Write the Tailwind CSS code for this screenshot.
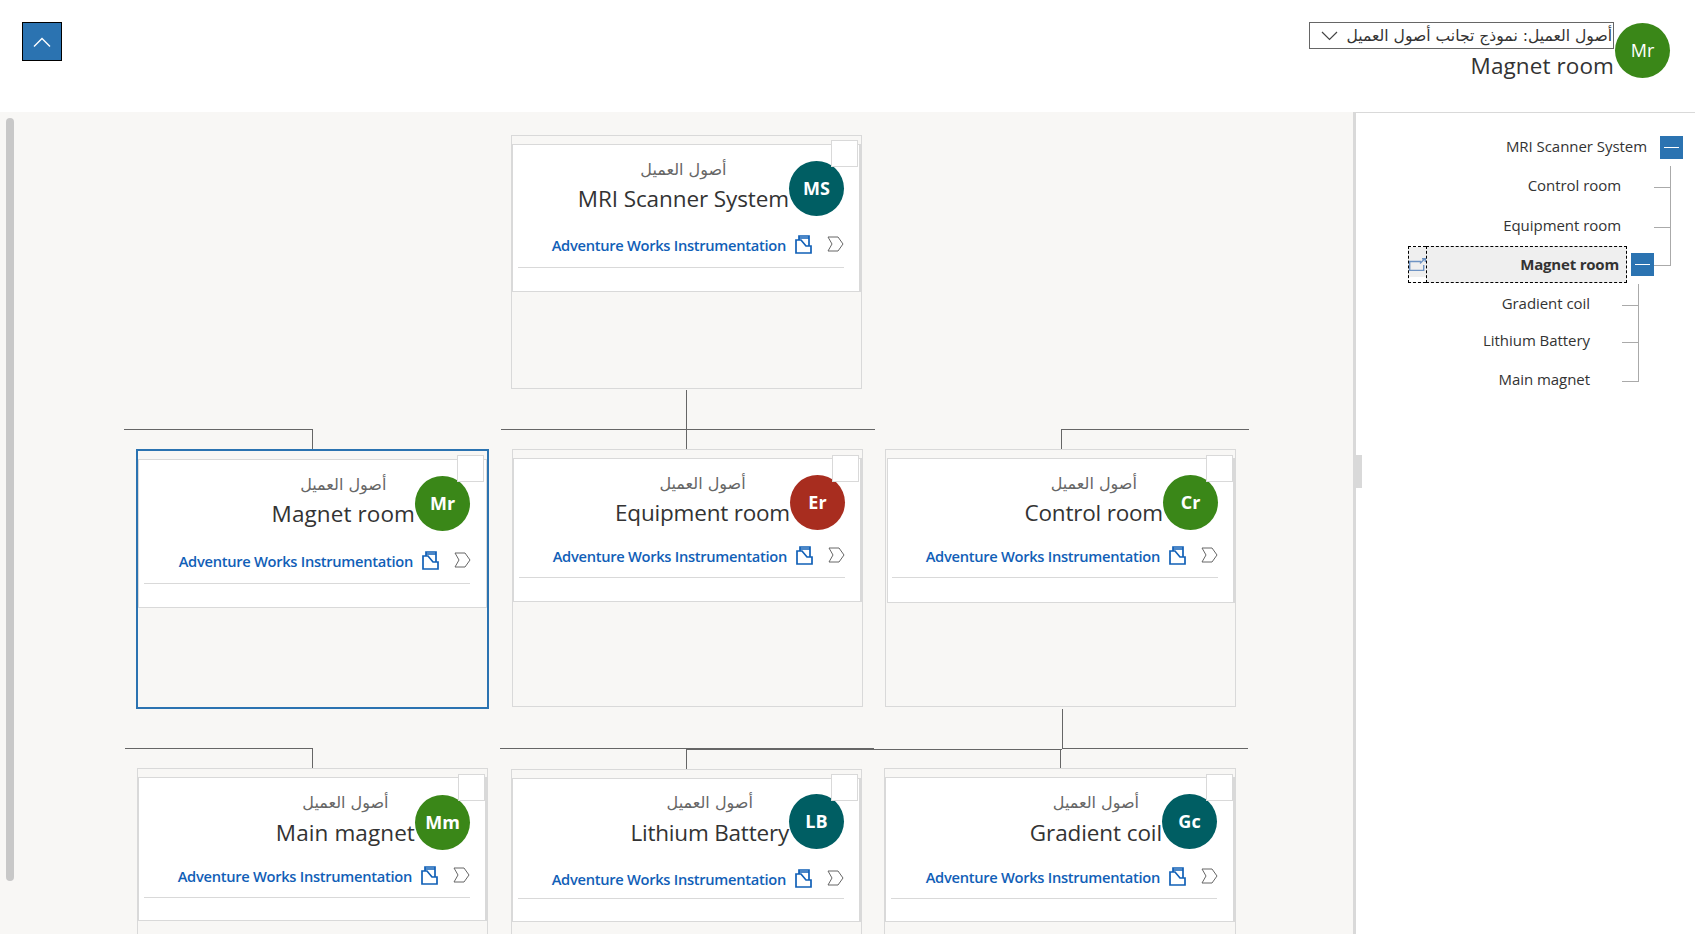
<!DOCTYPE html>
<html lang="ar">
<head>
    <meta charset="UTF-8">
    <title>Magnet room</title>
    <script src="https://cdn.jsdelivr.net/npm/@tailwindcss/browser@4"></script>
</head>
<body class="h-screen overflow-hidden bg-white font-['Open_Sans','DejaVu_Sans',sans-serif] text-[#333]">

    <!-- header -->
    <header class="h-[112px] flex justify-between items-start">
        <button class="mt-[22px] ml-[22px] w-10 h-[39px] bg-[#2b73b1] border border-black flex items-center justify-center">
            <svg width="18" height="10" viewBox="0 0 18 10" fill="none" stroke="white" stroke-width="1.4"><path d="M1 9.5 9 1.5l8 8"/></svg>
        </button>
        <div class="mt-[22px] mr-[25px] flex items-start">
            <div class="flex flex-col items-end">
                <div dir="ltr" class="w-[305px] h-[27px] border border-[#666] flex items-center justify-between pl-[11px] pr-[1px]">
                    <svg width="17" height="10" viewBox="0 0 17 10" fill="none" stroke="#444" stroke-width="1.2"><path d="M1 1l7.500 7.500L16 1"/></svg>
                    <span dir="rtl" class="mt-[2px] text-[15.6px] leading-none font-['DejaVu_Sans',sans-serif]">أصول العميل: نموذج تجانب أصول العميل</span>
                </div>
                <div class="text-[22.5px] leading-[36px] -mt-[1px] tracking-[0.1px]">Magnet room</div>
            </div>
            <div class="ml-[1px] mt-[1px] w-[55px] h-[55px] rounded-full bg-[#3a8718] text-white text-[18px] flex items-center justify-center">Mr</div>
        </div>
    </header>

    <main class="h-[822px] flex">
        <!-- org chart canvas -->
        <section class="relative flex-1 bg-[#f8f7f5] overflow-hidden">
            <div class="absolute left-[6px] top-[6px] w-2 h-[763px] rounded-full bg-[#c8c8c8]"></div>

            <!-- connectors -->
            <div class="absolute left-[124px] top-[317px] w-[189px] h-px bg-[#666]"></div>
            <div class="absolute left-[312px] top-[317px] w-px h-[20px] bg-[#666]"></div>
            <div class="absolute left-[686px] top-[278px] w-px h-[59px] bg-[#666]"></div>
            <div class="absolute left-[501px] top-[317px] w-[374px] h-px bg-[#666]"></div>
            <div class="absolute left-[1061px] top-[317px] w-[188px] h-px bg-[#666]"></div>
            <div class="absolute left-[1061px] top-[317px] w-px h-[20px] bg-[#666]"></div>
            <div class="absolute left-[1062px] top-[597px] w-px h-[40px] bg-[#666]"></div>
            <div class="absolute left-[125px] top-[636px] w-[188px] h-px bg-[#666]"></div>
            <div class="absolute left-[312px] top-[636px] w-px h-[21px] bg-[#666]"></div>
            <div class="absolute left-[500px] top-[636px] w-[374px] h-px bg-[#666]"></div>
            <div class="absolute left-[686px] top-[637px] w-[376px] h-px bg-[#666]"></div>
            <div class="absolute left-[686px] top-[637px] w-px h-[20px] bg-[#666]"></div>
            <div class="absolute left-[1062px] top-[636px] w-[186px] h-px bg-[#666]"></div>
            <div class="absolute left-[1060px] top-[637px] w-px h-[20px] bg-[#666]"></div>

            <!-- MRI Scanner System -->
            <article class="absolute left-[511px] top-[23px] w-[351px] h-[254px] border border-[#d9d9d9] pt-2">
                <div class="absolute right-[3px] top-[4px] w-[27px] h-[27px] border border-[#d9d9d9] bg-white z-10"></div>
                <div class="h-[148px] bg-white border border-[#d9d9d9] border-r-2 pt-[16px] pl-[5px] pr-[15px]">
                    <div class="flex justify-end items-start">
                        <div class="flex flex-col items-center -mt-1">
                            <span class="h-6 text-[16px] leading-[26px] text-[#666] font-['DejaVu_Sans',sans-serif]">أصول العميل</span>
                            <span class="text-[22.5px] leading-9 tracking-[-0.1px] whitespace-nowrap">MRI Scanner System</span>
                        </div>
                        <div class="w-[55px] h-[55px] rounded-full bg-[#005e63] text-white font-bold text-[18px] flex items-center justify-center">MS</div>
                    </div>
                    <div class="mt-[16px] h-6 flex justify-end items-center">
                        <a class="text-[14.7px] font-semibold text-[#1160b7] tracking-[-0.3px] whitespace-nowrap">Adventure Works Instrumentation</a>
                        <svg class="ml-[9px] mb-[2px]" width="17" height="19" viewBox="0 0 17 19" fill="none" stroke="#1160b7" stroke-width="1.7"><path d="M1 5h5l5 6h5v7H1zM4 5V1h10v10M4 3h10"/></svg>
                        <svg class="ml-[15px] mb-[2px]" width="17" height="16" viewBox="0 0 17 16" fill="none" stroke="#666"><path d="M1 1h10l5 7-5 7H1l4-7z"/></svg>
                    </div>
                    <div class="mt-[10px] border-b border-[#d9d9d9]"></div>
                </div>
            </article>

            <!-- Magnet room (selected) -->
            <article class="absolute left-[136px] top-[337px] w-[353px] h-[260px] border-2 border-[#2b73b1] pt-2">
                <div class="absolute right-[3px] top-[4px] w-[27px] h-[27px] border border-[#d9d9d9] bg-white z-10"></div>
                <div class="h-[149px] bg-white border border-[#d9d9d9] pt-[16px] pl-[5px] pr-[16px]">
                    <div class="flex justify-end items-start">
                        <div class="flex flex-col items-center -mt-1">
                            <span class="h-6 text-[16px] leading-[26px] text-[#666] font-['DejaVu_Sans',sans-serif]">أصول العميل</span>
                            <span class="text-[22.5px] leading-9 tracking-[0.1px] whitespace-nowrap">Magnet room</span>
                        </div>
                        <div class="w-[55px] h-[55px] rounded-full bg-[#3a8718] text-white font-bold text-[18px] flex items-center justify-center">Mr</div>
                    </div>
                    <div class="mt-[17px] -mr-px h-6 flex justify-end items-center">
                        <a class="text-[14.7px] font-semibold text-[#1160b7] tracking-[-0.3px] whitespace-nowrap">Adventure Works Instrumentation</a>
                        <svg class="ml-[9px] mb-[2px]" width="17" height="19" viewBox="0 0 17 19" fill="none" stroke="#1160b7" stroke-width="1.7"><path d="M1 5h5l5 6h5v7H1zM4 5V1h10v10M4 3h10"/></svg>
                        <svg class="ml-[15px] mb-[2px]" width="17" height="16" viewBox="0 0 17 16" fill="none" stroke="#666"><path d="M1 1h10l5 7-5 7H1l4-7z"/></svg>
                    </div>
                    <div class="mt-[10px] border-b border-[#d9d9d9]"></div>
                </div>
            </article>

            <!-- Equipment room -->
            <article class="absolute left-[512px] top-[337px] w-[351px] h-[258px] border border-[#d9d9d9] pt-2">
                <div class="absolute right-[3px] top-[5px] w-[27px] h-[27px] border border-[#d9d9d9] bg-white z-10"></div>
                <div class="h-[144px] bg-white border border-[#d9d9d9] border-r-2 pt-[16px] pl-[5px] pr-[15px]">
                    <div class="flex justify-end items-start">
                        <div class="flex flex-col items-center -mt-1">
                            <span class="h-6 text-[16px] leading-[26px] text-[#666] font-['DejaVu_Sans',sans-serif]">أصول العميل</span>
                            <span class="text-[22.5px] leading-9 tracking-[-0.2px] whitespace-nowrap">Equipment room</span>
                        </div>
                        <div class="w-[55px] h-[55px] rounded-full bg-[#a82d1f] text-white font-bold text-[18px] flex items-center justify-center">Er</div>
                    </div>
                    <div class="mt-[13px] h-6 flex justify-end items-center">
                        <a class="text-[14.7px] font-semibold text-[#1160b7] tracking-[-0.3px] whitespace-nowrap">Adventure Works Instrumentation</a>
                        <svg class="ml-[9px] mb-[2px]" width="17" height="19" viewBox="0 0 17 19" fill="none" stroke="#1160b7" stroke-width="1.7"><path d="M1 5h5l5 6h5v7H1zM4 5V1h10v10M4 3h10"/></svg>
                        <svg class="ml-[15px] mb-[2px]" width="17" height="16" viewBox="0 0 17 16" fill="none" stroke="#666"><path d="M1 1h10l5 7-5 7H1l4-7z"/></svg>
                    </div>
                    <div class="mt-[9px] border-b border-[#d9d9d9]"></div>
                </div>
            </article>

            <!-- Control room -->
            <article class="absolute left-[885px] top-[337px] w-[351px] h-[258px] border border-[#d9d9d9] pt-2">
                <div class="absolute right-[2px] top-[5px] w-[27px] h-[27px] border border-[#d9d9d9] bg-white z-10"></div>
                <div class="h-[145px] ml-[1px] bg-white border border-[#d9d9d9] border-r-2 pt-[16px] pl-[4px] pr-[15px]">
                    <div class="flex justify-end items-start">
                        <div class="flex flex-col items-center -mt-1">
                            <span class="h-6 text-[16px] leading-[26px] text-[#666] font-['DejaVu_Sans',sans-serif]">أصول العميل</span>
                            <span class="text-[22.5px] leading-9 tracking-[-0.2px] whitespace-nowrap">Control room</span>
                        </div>
                        <div class="w-[55px] h-[55px] rounded-full bg-[#3a8718] text-white font-bold text-[18px] flex items-center justify-center">Cr</div>
                    </div>
                    <div class="mt-[13px] h-6 flex justify-end items-center">
                        <a class="text-[14.7px] font-semibold text-[#1160b7] tracking-[-0.3px] whitespace-nowrap">Adventure Works Instrumentation</a>
                        <svg class="ml-[9px] mb-[2px]" width="17" height="19" viewBox="0 0 17 19" fill="none" stroke="#1160b7" stroke-width="1.7"><path d="M1 5h5l5 6h5v7H1zM4 5V1h10v10M4 3h10"/></svg>
                        <svg class="ml-[15px] mb-[2px]" width="17" height="16" viewBox="0 0 17 16" fill="none" stroke="#666"><path d="M1 1h10l5 7-5 7H1l4-7z"/></svg>
                    </div>
                    <div class="mt-[9px] border-b border-[#d9d9d9]"></div>
                </div>
            </article>

            <!-- Main magnet -->
            <article class="absolute left-[137px] top-[656px] w-[351px] h-[253px] border border-[#d9d9d9] pt-2">
                <div class="absolute right-[2px] top-[5px] w-[27px] h-[27px] border border-[#d9d9d9] bg-white z-10"></div>
                <div class="h-[144px] bg-white border border-[#d9d9d9] border-r-2 pt-[17px] pl-[5px] pr-[15px]">
                    <div class="flex justify-end items-start">
                        <div class="flex flex-col items-center -mt-1">
                            <span class="h-6 text-[16px] leading-6 text-[#666] font-['DejaVu_Sans',sans-serif]">أصول العميل</span>
                            <span class="text-[22.5px] leading-9 tracking-[0.1px] whitespace-nowrap">Main magnet</span>
                        </div>
                        <div class="w-[55px] h-[55px] rounded-full bg-[#3a8718] text-white font-bold text-[18px] flex items-center justify-center">Mm</div>
                    </div>
                    <div class="mt-[13px] h-6 flex justify-end items-center">
                        <a class="text-[14.7px] font-semibold text-[#1160b7] tracking-[-0.3px] whitespace-nowrap">Adventure Works Instrumentation</a>
                        <svg class="ml-[9px] mb-[2px]" width="17" height="19" viewBox="0 0 17 19" fill="none" stroke="#1160b7" stroke-width="1.7"><path d="M1 5h5l5 6h5v7H1zM4 5V1h10v10M4 3h10"/></svg>
                        <svg class="ml-[15px] mb-[2px]" width="17" height="16" viewBox="0 0 17 16" fill="none" stroke="#666"><path d="M1 1h10l5 7-5 7H1l4-7z"/></svg>
                    </div>
                    <div class="mt-[9px] border-b border-[#d9d9d9]"></div>
                </div>
            </article>

            <!-- Lithium Battery -->
            <article class="absolute left-[511px] top-[657px] w-[351px] h-[253px] border border-[#d9d9d9] pt-2">
                <div class="absolute right-[3px] top-[4px] w-[27px] h-[27px] border border-[#d9d9d9] bg-white z-10"></div>
                <div class="h-[144px] bg-white border border-[#d9d9d9] border-r-2 pt-[15px] pl-[5px] pr-[15px]">
                    <div class="flex justify-end items-start">
                        <div class="flex flex-col items-center -mt-1">
                            <span class="h-6 text-[16px] leading-[26px] text-[#666] font-['DejaVu_Sans',sans-serif]">أصول العميل</span>
                            <span class="mt-[1px] text-[22.5px] leading-9 tracking-[-0.2px] whitespace-nowrap">Lithium Battery</span>
                        </div>
                        <div class="w-[55px] h-[55px] rounded-full bg-[#005e63] text-white font-bold text-[18px] flex items-center justify-center">LB</div>
                    </div>
                    <div class="mt-[16px] h-6 flex justify-end items-center">
                        <a class="text-[14.7px] font-semibold text-[#1160b7] tracking-[-0.3px] whitespace-nowrap">Adventure Works Instrumentation</a>
                        <svg class="ml-[9px] mb-[2px]" width="17" height="19" viewBox="0 0 17 19" fill="none" stroke="#1160b7" stroke-width="1.7"><path d="M1 5h5l5 6h5v7H1zM4 5V1h10v10M4 3h10"/></svg>
                        <svg class="ml-[15px] mb-[2px]" width="17" height="16" viewBox="0 0 17 16" fill="none" stroke="#666"><path d="M1 1h10l5 7-5 7H1l4-7z"/></svg>
                    </div>
                    <div class="mt-[7px] border-b border-[#d9d9d9]"></div>
                </div>
            </article>

            <!-- Gradient coil -->
            <article class="absolute left-[884px] top-[656px] w-[352px] h-[254px] border border-[#d9d9d9] pt-2">
                <div class="absolute right-[2px] top-[5px] w-[27px] h-[27px] border border-[#d9d9d9] bg-white z-10"></div>
                <div class="h-[145px] bg-white border border-[#d9d9d9] border-r-2 pt-[16px] pl-[5px] pr-[16px]">
                    <div class="flex justify-end items-start">
                        <div class="flex flex-col items-center -mt-1">
                            <span class="h-6 text-[16px] leading-[26px] text-[#666] font-['DejaVu_Sans',sans-serif]">أصول العميل</span>
                            <span class="mt-[1px] text-[22.5px] leading-9 tracking-[-0.1px] whitespace-nowrap">Gradient coil</span>
                        </div>
                        <div class="w-[55px] h-[55px] rounded-full bg-[#005e63] text-white font-bold text-[18px] flex items-center justify-center">Gc</div>
                    </div>
                    <div class="mt-[14px] -mr-px h-6 flex justify-end items-center">
                        <a class="text-[14.7px] font-semibold text-[#1160b7] tracking-[-0.3px] whitespace-nowrap">Adventure Works Instrumentation</a>
                        <svg class="ml-[9px] mb-[2px]" width="17" height="19" viewBox="0 0 17 19" fill="none" stroke="#1160b7" stroke-width="1.7"><path d="M1 5h5l5 6h5v7H1zM4 5V1h10v10M4 3h10"/></svg>
                        <svg class="ml-[15px] mb-[2px]" width="17" height="16" viewBox="0 0 17 16" fill="none" stroke="#666"><path d="M1 1h10l5 7-5 7H1l4-7z"/></svg>
                    </div>
                    <div class="mt-[9px] border-b border-[#d9d9d9]"></div>
                </div>
            </article>
        </section>

        <!-- tree panel -->
        <aside class="relative w-[342px] bg-white border-l-[3px] border-t border-[#d9d9d9] text-[15px] tracking-[-0.05px]">
            <div class="absolute -left-[3px] top-[342px] w-[9px] h-[33px] bg-[#d9d9d9]"></div>

            <div class="absolute right-6 top-[53px] w-px h-[100px] bg-[#aaa]"></div>
            <div class="absolute right-6 top-[74px] w-[17px] h-px bg-[#aaa]"></div>
            <div class="absolute right-6 top-[114px] w-[17px] h-px bg-[#aaa]"></div>
            <div class="absolute right-6 top-[152px] w-[17px] h-px bg-[#aaa]"></div>
            <div class="absolute right-14 top-[171px] w-px h-[98px] bg-[#aaa]"></div>
            <div class="absolute right-14 top-[192px] w-[17px] h-px bg-[#aaa]"></div>
            <div class="absolute right-14 top-[229px] w-[17px] h-px bg-[#aaa]"></div>
            <div class="absolute right-14 top-[268px] w-[17px] h-px bg-[#aaa]"></div>

            <div class="mt-[22px] h-6 flex justify-end items-center pr-3">
                <span class="mb-[2px]">MRI Scanner System</span>
                <button class="ml-[13px] w-[23px] h-[23px] bg-[#2b73b1] flex items-center justify-center"><span class="w-[15px] h-px bg-white"></span></button>
            </div>
            <div class="mt-[14px] h-6 flex justify-end items-center pr-[74px]">Control room</div>
            <div class="mt-[16px] h-6 flex justify-end items-center pr-[74px]">Equipment room</div>
            <div class="mt-[9px] h-[37px] flex justify-end items-center pr-[41px]">
                <div class="w-[18px] h-[37px] border border-dashed border-black border-r-0 bg-[linear-gradient(#efefef_85%,white_85%)] flex items-center">
                    <svg width="17" height="13" viewBox="0 0 17 13" fill="none" stroke="#6f94c4" stroke-width="1.4"><path d="M12 3.500H0.700v9h14V7M11 5.500l5-5M13 0.700h3.300V4"/></svg>
                </div>
                <div class="w-[201px] h-[37px] border border-dashed border-black bg-[#efefef] flex items-center justify-end pr-[7px] font-bold tracking-[-0.2px]">Magnet room</div>
                <button class="ml-1 w-[23px] h-[23px] bg-[#2b73b1] flex items-center justify-center"><span class="w-[15px] h-px bg-white"></span></button>
            </div>
            <div class="mt-[8px] h-6 flex justify-end items-center pr-[105px]">Gradient coil</div>
            <div class="mt-[13px] h-6 flex justify-end items-center pr-[105px]">Lithium Battery</div>
            <div class="mt-[15px] h-6 flex justify-end items-center pr-[105px]">Main magnet</div>
        </aside>
    </main>
</body>
</html>
